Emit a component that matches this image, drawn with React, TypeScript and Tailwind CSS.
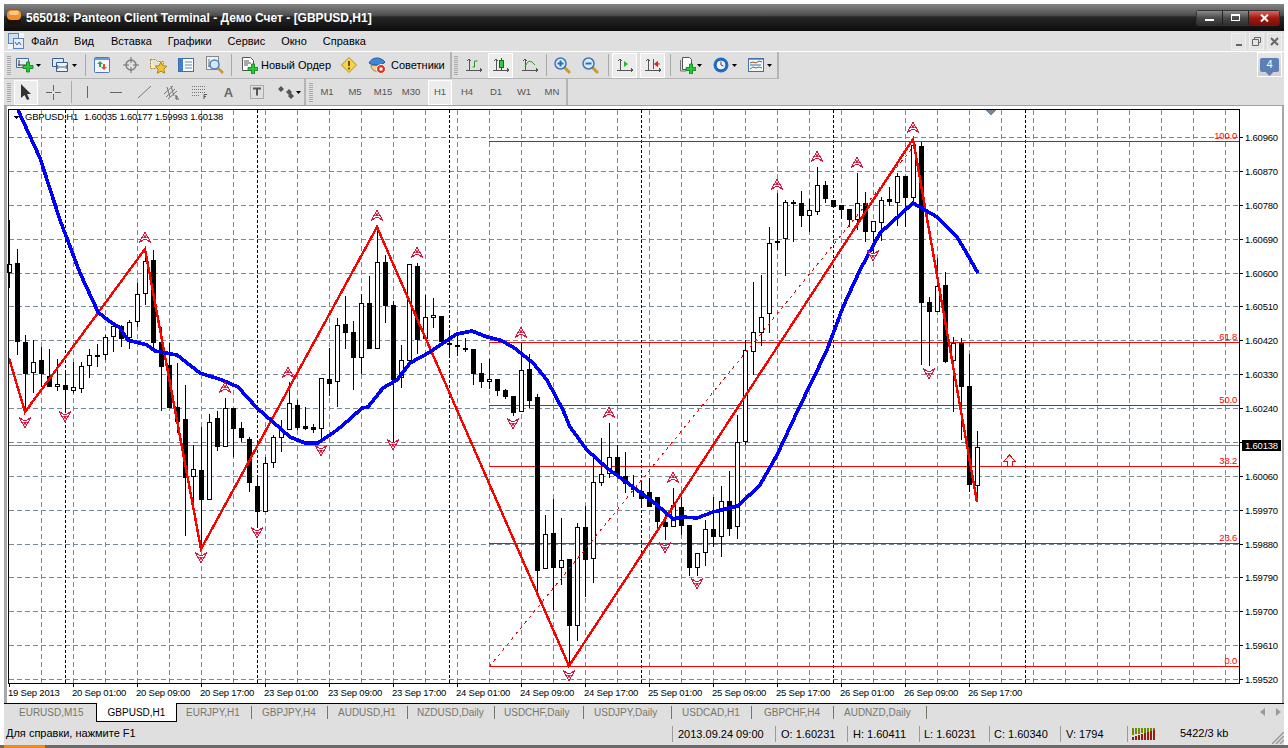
import React from 'react'

// [high, low, bodyTop, bodyBottom, black]; one candle every 8px from x=9
const candles: number[][] = [
  [220,288,264,273,0],[249,355,263,342,1],[335,413,342,374,1],[340,393,362,373,0],[347,387,360,374,1],
  [349,387,376,387,1],[359,391,384,387,0],[372,410,385,390,1],[362,393,387,391,0],[362,393,366,389,0],
  [349,378,355,366,0],[344,367,355,356,1],[335,360,337,355,0],[323,352,326,337,0],[325,347,326,339,1],
  [320,349,322,338,0],[283,327,294,322,0],[248,305,261,294,0],[250,350,260,343,1],[327,411,342,367,1],
  [343,408,365,408,1],[363,433,407,422,1],[385,536,419,478,1],[445,507,469,477,0],[427,548,470,500,1],
  [414,500,422,500,0],[411,451,418,447,1],[398,447,408,447,0],[408,457,408,429,1],[422,442,428,438,1],
  [437,492,439,483,1],[477,527,486,512,1],[457,512,463,512,0],[435,468,437,463,0],[420,452,430,438,0],
  [382,430,403,430,0],[400,430,405,428,1],[407,430,426,429,1],[424,433,427,430,1],[378,440,378,429,0],
  [348,396,379,384,1],[318,407,325,382,0],[296,349,324,333,1],[321,390,332,358,1],[294,374,303,358,0],
  [276,349,303,349,1],[227,349,262,349,0],[255,323,262,306,1],[301,450,305,380,1],[345,388,360,378,0],
  [264,361,264,361,0],[263,354,266,340,1],[295,339,317,339,0],[298,328,315,317,0],[316,342,316,342,1],
  [331,356,343,345,1],[334,356,345,347,1],[338,352,348,350,1],[349,385,349,374,1],[363,388,373,382,1],
  [359,389,379,381,0],[379,396,379,391,1],[389,399,390,397,1],[396,416,396,413,1],[343,412,370,412,0],
  [354,408,369,401,1],[394,592,397,571,1],[515,569,534,569,0],[499,610,533,568,1],[518,585,560,568,0],
  [559,667,559,626,1],[523,641,527,626,0],[506,597,527,560,1],[457,583,482,559,0],[438,486,474,483,0],
  [423,478,457,474,0],[445,477,457,475,1],[452,493,476,484,1],[475,497,487,490,1],[483,507,491,499,1],
  [478,507,492,507,1],[497,529,497,522,1],[512,540,522,527,1],[488,527,505,527,0],[497,535,507,526,1],
  [525,576,525,568,1],[553,576,553,568,0],[520,566,529,553,0],[497,547,529,537,1],[486,557,501,537,0],
  [471,536,501,529,1],[415,539,442,527,0],[340,445,350,442,0],[282,375,332,352,0],[275,346,317,333,0],
  [227,333,243,314,0],[193,250,241,242,1],[200,276,202,239,0],[200,242,202,204,1],[191,227,203,216,1],
  [199,232,210,216,0],[167,215,185,212,0],[181,203,185,199,1],[200,207,200,207,1],[205,219,205,210,1],
  [209,227,209,220,1],[173,230,203,220,0],[192,242,203,232,1],[221,257,221,232,0],[197,241,200,223,0],
  [187,206,199,202,1],[173,226,176,203,0],[176,227,176,198,1],[140,205,145,198,0],[142,365,146,303,1],
  [297,366,302,312,1],[258,312,286,312,0],[272,363,285,362,1],[337,412,343,361,0],[338,440,343,387,1],
  [354,492,386,485,1],[431,502,447,486,0],
]

const blue = '18,110 40,158 60,220 80,273 98,312 108,320 120,328 128,340 147,345 155,351 177,355 200,373 222,380 238,387 257,408 273,422 290,437 305,443 318,443 337,430 350,419 362,408 368,407 383,388 397,380 410,363 430,352 457,334 472,331 487,337 500,340 513,347 533,363 547,380 563,410 570,427 587,450 607,468 633,487 657,505 673,519 682,517 697,518 713,512 738,506 760,485 777,455 798,410 827,350 843,307 860,270 880,233 913,203 937,217 957,237 963,247 978,273'
const zigzag = '9,358 25,412 145,249 201,549 377,227 569,666 913,139 977,502'

const upMarks = [[145,238],[377,216],[417,253],[288,373],[225,388],[521,333],[609,413],[673,478],[777,185],[817,157],[857,163],[913,128]]
const downMarks = [[25,422],[65,416],[201,557],[257,532],[321,450],[393,444],[513,423],[569,675],[665,547],[697,583],[873,255],[929,373]]

const prices = ['1.60960','1.60870','1.60780','1.60690','1.60600','1.60510','1.60420','1.60330','1.60240','1.60150','1.60060','1.59970','1.59880','1.59790','1.59700','1.59610','1.59520']
const times = ['20 Sep 01:00','20 Sep 09:00','20 Sep 17:00','23 Sep 01:00','23 Sep 09:00','23 Sep 17:00','24 Sep 01:00','24 Sep 09:00','24 Sep 17:00','25 Sep 01:00','25 Sep 09:00','25 Sep 17:00','26 Sep 01:00','26 Sep 09:00','26 Sep 17:00']
const fibo = [[141,'100.0'],[342,'61.8'],[405,'50.0'],[466,'38.2'],[543,'23.6'],[666,'0.0']] as [number,string][]

const priceY = (i: number) => Math.round(137 + i * 33.875) + 0.5
const gridX = Array.from({ length: 38 }, (_, i) => 41 + 32 * i)
const periodX = [65, 257, 449, 641, 833, 1025]

function Chart() {
  return (
    <svg width={1275} height={597} viewBox="7 106 1275 597" className="block shrink-0">
      <rect x={7} y={106} width={1275} height={597} fill="#fff" />
      <g shapeRendering="crispEdges" fill="none" strokeWidth={1}>
        {prices.map((_, i) => <line key={i} x1={9} x2={1239} y1={priceY(i)} y2={priceY(i)} stroke="#778899" strokeDasharray="5 3" />)}
        {gridX.map(x => <line key={x} x1={x + 0.5} x2={x + 0.5} y1={110} y2={683} stroke="#778899" strokeDasharray="5 3" />)}
        {periodX.map(x => <line key={x} x1={x + 0.5} x2={x + 0.5} y1={110} y2={683} stroke="#000" strokeDasharray="3 2" />)}
        <line x1={9} x2={1239} y1={445.5} y2={445.5} stroke="#778899" />
        {fibo.map(([y]) => <line key={y} x1={489} x2={1239} y1={y + 0.5} y2={y + 0.5} stroke="#f00" />)}
        {candles.map(([h, l, t, b, k], i) => {
          const x = 9 + 8 * i
          return (
            <g key={i}>
              <rect x={x} y={h} width={1} height={l - h} fill="#000" />
              {k ? (
                <rect x={x - 2} y={t} width={5} height={Math.max(b - t, 2)} fill="#000" />
              ) : (
                <rect x={x - 1.5} y={t + 0.5} width={4} height={Math.max(b - t - 1, 2)} fill="#fff" stroke="#000" />
              )}
            </g>
          )
        })}
        <polyline points="489,667 918,141" stroke="#f00" strokeDasharray="3 4" />
        <polyline points={zigzag} stroke="#f00" strokeWidth={2.4} />
        <polyline points={blue} stroke="#00f" strokeWidth={3.6} />
        <path d="M1004 461h3v5h5v-5h3l-5.500-6z" stroke="#f00" fill="#fff" />
        <path d="M985 110h12l-6 5z" fill="#778899" stroke="none" />
        <path d="M13 116h6l-3 3z" fill="#000" stroke="none" />
      </g>
      {upMarks.map(([x, y]) => (
        <g key={`${x}u`} transform={`translate(${x} ${y})`}>
          <path d="M0-5.500L6 4.500 0 1-6 4.500z" fill="#fff" stroke="#dc143c" shapeRendering="crispEdges" />
          <path d="M0-3.500L2 0H-2z" fill="#dc143c" />
        </g>
      ))}
      {downMarks.map(([x, y]) => (
        <g key={`${x}d`} transform={`translate(${x} ${y})`}>
          <path d="M0 5.500L6-4.500 0-1-6-4.500z" fill="#fff" stroke="#dc143c" shapeRendering="crispEdges" />
          <path d="M0 3.500L2 0H-2z" fill="#dc143c" />
        </g>
      ))}
      <rect x={8.5} y={109.5} width={1231} height={574} fill="none" stroke="#000" shapeRendering="crispEdges" />
      <g className="text-[9.5px] tracking-[-0.2px]" fill="#000">
        <text x={25} y={120}>GBPUSD,H1</text>
        <text x={84} y={120}>1.60035 1.60177 1.59993 1.60138</text>
        {prices.map((p, i) => (
          <g key={p}>
            <rect x={1240} y={priceY(i) - 0.5} width={3} height={1} />
            <text x={1245} y={priceY(i) + 3.5}>{p}</text>
          </g>
        ))}
        <rect x={1242} y={440} width={39} height={11} />
        <text x={1245} y={449} fill="#fff">1.60138</text>
        <rect x={9} y={684} width={1} height={3} />
        <text x={8} y={696}>19 Sep 2013</text>
        {times.map((t, i) => (
          <g key={t}>
            <rect x={73 + 64 * i} y={684} width={1} height={3} />
            <text x={72 + 64 * i} y={696}>{t}</text>
          </g>
        ))}
      </g>
      <g className="text-[9.5px] tracking-[-0.2px]" fill="#f00">
        {fibo.map(([y, label]) => <text key={label} x={1237} y={y - 2} textAnchor="end">{label}</text>)}
      </g>
    </svg>
  )
}

const Caret = ({ className = '' }: { className?: string }) => <svg width={5} height={3} viewBox="0 0 5 3" className={`shrink-0 ${className}`}><path d="M0 0h5L2.500 3z" fill="#000" /></svg>
const Grip = ({ className = '' }: { className?: string }) => <div className={`w-[4px] h-[20px] shrink-0 bg-[repeating-linear-gradient(0deg,#a8a8a8_0_1px,transparent_1px_2px)] ${className}`} />
const Sep = ({ className = '' }: { className?: string }) => <div className={`w-px h-[22px] shrink-0 bg-[#a9a9a9] ${className}`} />
const Pressed = ({ className = '', children }: { className?: string; children: React.ReactNode }) => (
  <div className={`h-[25px] flex items-center justify-center shrink-0 bg-[#ececec] border border-white ${className}`}>{children}</div>
)

// all toolbar icons share the same kind of small svg
const Ico = ({ w = 16, h = 16, className = '', children }: { w?: number; h?: number; className?: string; children: React.ReactNode }) => (
  <svg width={w} height={h} viewBox={`0 0 ${w} ${h}`} className={`shrink-0 ${className}`}>{children}</svg>
)
const Plus = ({ x, y }: { x: number; y: number }) => (
  <path transform={`translate(${x} ${y})`} d="M3.500 0h3v3.500H10v3H6.500V10h-3V6.500H0v-3h3.500z" fill="#22cc33" stroke="#0c7a1a" strokeWidth={0.8} />
)
const Axes = () => <path d="M3 1v12M0 12h16M3 1 1.500 3M3 1l1.500 2M16 12l-2-1.500M16 12l-2 1.500" fill="none" stroke="#555" strokeWidth={1} shapeRendering="crispEdges" />
const Glass = ({ plus }: { plus?: boolean }) => (
  <Ico w={17} h={17}>
    <path d="M10 10l5 5" stroke="#c79a2a" strokeWidth={3} strokeLinecap="round" />
    <circle cx={6.500} cy={6.500} r={5.500} fill="#dbeaf7" stroke="#3a78b8" strokeWidth={1.500} />
    <path d={plus ? 'M3.500 6.500h6M6.500 3.500v6' : 'M3.500 6.500h6'} stroke="#2e6fb0" strokeWidth={2} />
  </Ico>
)

function Toolbars() {
  return (
    <div className="h-[55px] bg-[#dfdfdf] border-t border-white shrink-0">
      <div className="h-[27px] flex">
        <div className="w-[448px] flex items-center border-r-2 border-b border-[#b4b4b4]">
          <Grip className="ml-[3px]" />
          <Ico w={18} h={16} className="ml-[5px]">
            <path d="M.5 1.500h12v9H.5z" fill="#e8eef6" stroke="#4a6a9a" />
            <path d="M3 3v6M2 8h8" stroke="#333" />
            <Plus x={7} y={5} />
          </Ico>
          <Caret className="ml-[2px]" />
          <Ico w={18} h={16} className="ml-[10px]">
            <path d="M1.500 1.500h11v8h-11z" fill="#dfe9f5" stroke="#3c5c8e" />
            <path d="M5.500 5.500h11v9h-11z" fill="#eef3fa" stroke="#3c5c8e" />
            <path d="M7 10h8M7 8l-1 2 1 2M15 8l1 2-1 2" stroke="#3c5c8e" fill="none" />
          </Ico>
          <Caret className="ml-[3px]" />
          <Sep className="ml-[8px]" />
          <Ico className="ml-[8px]">
            <rect x={0.500} y={0.500} width={15} height={15} rx={1} fill="#f3f7fc" stroke="#4b79b5" />
            <rect x={1} y={1} width={14} height={2} fill="#6d9ad0" />
            <path d="M6 4l3 3H7v3H5V7H3z" fill="#2aa844" />
            <path d="M10 13l-3-3h2V7h2v3h2z" fill="#e0502a" />
          </Ico>
          <Ico className="ml-[13px]">
            <circle cx={8} cy={8} r={5} fill="none" stroke="#808080" strokeWidth={1.500} />
            <path d="M8 0v6M8 10v6M0 8h6M10 8h6" stroke="#707070" />
          </Ico>
          <Ico w={18} h={18} className="ml-[10px]">
            <path d="M1.500 3.500h5l2 2h6v3M1.500 3.500v9h5" fill="#fbeeb0" stroke="#9a8a4a" strokeDasharray="2 1" />
            <path d="M12 6l1.800 3.700 4 .6-2.900 2.800.7 4-3.600-1.900-3.600 1.900.7-4-2.900-2.800 4-.6z" fill="#f2c530" stroke="#a8841c" />
          </Ico>
          <Ico className="ml-[11px]">
            <rect x={0.500} y={1.500} width={15} height={13} fill="#fff" stroke="#3f6fae" />
            <rect x={1} y={2} width={4} height={12} fill="#3f7fd0" />
            <path d="M7 5h7M7 8h7M7 11h7" stroke="#5a86bb" />
          </Ico>
          <Ico w={18} h={18} className="ml-[12px]">
            <rect x={0.500} y={0.500} width={12} height={13} fill="#eef2f6" stroke="#888" />
            <path d="M3 3v8M2 10h8" stroke="#777" />
            <path d="M12 12l5 5" stroke="#c49a2c" strokeWidth={2.500} />
            <circle cx={8.500} cy={8.500} r={4.500} fill="#d5e6f5" stroke="#4c84bd" strokeWidth={1.500} />
          </Ico>
          <Sep className="ml-[7px]" />
          <Ico w={17} h={18} className="ml-[9px]">
            <path d="M1.500 1.500h8l3 3v10h-11z" fill="#fff" stroke="#555" />
            <path d="M3 5h5M3 7h7M3 9h4" stroke="#555" />
            <Plus x={7} y={8} />
          </Ico>
          <span className="ml-[3px] w-[70px] shrink-0 text-[11px] whitespace-nowrap">Новый Ордер</span>
          <Ico className="ml-[10px]">
            <path d="M8 .5L15.500 8 8 15.500.5 8z" fill="#f6d445" stroke="#a8912a" />
            <path d="M8 4v5M8 10.500v2" stroke="#7a4a10" strokeWidth={2} />
          </Ico>
          <Ico w={18} h={18} className="ml-[11px]">
            <path d="M3 9c0 4 3 7 7 6l2-5z" fill="#f4d28a" stroke="#a97d2e" />
            <path d="M1 7c3-6 11-7 16-1-1 3-13 4-16 1z" fill="#3f86d8" stroke="#1e5ca8" />
            <circle cx={13} cy={13} r={4.500} fill="#e03020" stroke="#fff" />
            <rect x={11.500} y={11.500} width={3} height={3} fill="#fff" />
          </Ico>
          <span className="ml-[5px] w-[56px] shrink-0 text-[11px] whitespace-nowrap">Советники</span>
        </div>
        <div className="w-[327px] flex items-center border-r-2 border-b border-[#b4b4b4]">
          <Grip className="ml-[2px]" />
          <Ico w={16} h={14} className="ml-[8px]"><Axes /><path d="M8.500 9V3h3M8.500 9h-2" fill="none" stroke="#1d9a1d" /></Ico>
          <Pressed className="ml-[6px] w-[25px]"><Ico w={16} h={14}><Axes /><rect x={6.500} y={2.500} width={4} height={7} fill="#2ecc40" stroke="#0c6f16" /><path d="M8.500 0v3M8.500 9v3" stroke="#0c6f16" /></Ico></Pressed>
          <Ico w={16} h={14} className="ml-[9px]"><Axes /><path d="M3 9c2-5 4-7 7-5l3 3" fill="none" stroke="#2a9a2a" /></Ico>
          <Sep className="ml-[8px]" />
          <span className="ml-[7px] flex"><Glass plus /></span>
          <span className="ml-[11px] flex"><Glass /></span>
          <Sep className="ml-[9px]" />
          <Pressed className="ml-[3px] w-[25px]"><Ico w={16} h={14}><Axes /><path d="M7 3l4 3-4 3z" fill="#25b82a" /></Ico></Pressed>
          <Pressed className="ml-[3px] w-[25px]"><Ico w={16} h={14}><Axes /><path d="M8.500 1v10" stroke="#2a5bd0" /><path d="M15 6h-3M9.500 6l3-2.500v5z" stroke="#d0281e" fill="#d0281e" /></Ico></Pressed>
          <Sep className="ml-[5px]" />
          <Ico w={17} h={18} className="ml-[8px]">
            <path d="M3.500 1.500h7l2 2v10h-9z" fill="#fff" stroke="#555" />
            <path d="M1.500 4v11h6" fill="none" stroke="#777" />
            <Plus x={7} y={8} />
          </Ico>
          <Caret className="ml-px" />
          <Ico className="ml-[11px]">
            <circle cx={8} cy={8} r={7.500} fill="#1f6fd0" />
            <circle cx={8} cy={8} r={5} fill="#eef3f8" stroke="#0f4a98" />
            <path d="M8 4.500V8l2.500 1" fill="none" stroke="#445" />
          </Ico>
          <Caret className="ml-[3px]" />
          <Ico className="ml-[11px]">
            <rect x={0.500} y={1.500} width={15} height={13} fill="#f4f7fb" stroke="#3f6fae" />
            <rect x={1} y={2} width={14} height={1} fill="#7aa2d2" />
            <path d="M2 8h11" stroke="#3f6fae" />
            <path d="M2 6l3-1 3 1 3-2 3 1" fill="none" stroke="#a04a20" />
            <path d="M2 12l3-2 3 1 3-1 3 1" fill="none" stroke="#2a9a2a" />
          </Ico>
          <Caret className="ml-[3px]" />
        </div>
        <div className="ml-auto mr-[2px] w-[25px] h-[25px] flex items-center justify-center bg-[linear-gradient(to_bottom,#e8e8e8,#cfcfcf)] border border-white">
          <div className="relative w-[19px] h-[14px] bg-[#5e7fb5] rounded-[2px] flex items-center justify-center text-white text-[11px] leading-none">
            4
            <div className="absolute left-[7px] -bottom-[3px] w-[5px] h-[5px] bg-[#5e7fb5] rotate-45" />
          </div>
        </div>
      </div>
      <div className="h-[27px] flex border-b border-[#a0a0a0]">
        <div className="w-[302px] flex items-center border-r-2 border-[#b4b4b4]">
          <Grip className="ml-[3px]" />
          <Pressed className="ml-[3px] w-[24px]">
            <Ico w={12} h={16}><path d="M1 0v14l3.500-3 2.500 5 2.500-1-2.500-5H11z" fill="#333" /></Ico>
          </Pressed>
          <Ico w={17} h={17} className="ml-[7px]"><path d="M8.500 1v6M8.500 10v6M1 8.500h6M10 8.500h6" stroke="#666" shapeRendering="crispEdges" /></Ico>
          <Sep className="ml-[9px]" />
          <Ico w={14} h={14} className="ml-[8px]"><path d="M7.500 1v12" stroke="#666" shapeRendering="crispEdges" /></Ico>
          <Ico w={12} h={14} className="ml-[16px]"><path d="M0 7.500h12" stroke="#666" shapeRendering="crispEdges" /></Ico>
          <Ico w={13} h={14} className="ml-[16px]"><path d="M0 13L13 1" stroke="#777" /></Ico>
          <Ico w={18} h={16} className="ml-[12px]"><path d="M1 10l9-8M3 13l9-8M5 15l9-8M4 3l3 10M8 2l3 10" stroke="#777" fill="none" /><path d="M13 11v4h3M13 13h2" stroke="#555" fill="none" /></Ico>
          <Ico w={17} h={16} className="ml-[11px]"><path d="M0 2.500h13M0 5.500h13M0 8.500h13M0 11.500h8" stroke="#777" strokeDasharray="1 1" /><path d="M12 10.500v4.500M12 10.500h3M12 12.500h2" stroke="#555" fill="none" /></Ico>
          <span className="ml-[14px] w-[11px] shrink-0 text-[13px] font-bold text-[#666] leading-none text-center">A</span>
          <Ico w={14} h={14} className="ml-[16px]"><rect x={0.500} y={0.500} width={13} height={13} fill="none" stroke="#777" strokeDasharray="1 1" /><path d="M3 3.500h8M7 3.500v7" stroke="#555" strokeWidth={2} /></Ico>
          <Ico w={16} h={14} className="ml-[14px]"><path d="M3 3.500h2M11 10.500h2" stroke="#777" /><path d="M3 1l3 3-3 3-3-3zM11 4l3 3-3 3-3-3zM13 8l3 3-3 3-3-3z" fill="#555" /></Ico>
          <Caret className="ml-[2px]" />
        </div>
        <div className="w-[262px] flex items-center border-r-2 border-[#b4b4b4] text-[#555] text-[9.5px]">
          <Grip className="ml-[3px]" />
          <span className="w-[28px] text-center shrink-0">M1</span>
          <span className="w-[28px] text-center shrink-0">M5</span>
          <span className="w-[28px] text-center shrink-0">M15</span>
          <span className="w-[28px] text-center shrink-0">M30</span>
          <Pressed className="ml-[3px] w-[24px]">H1</Pressed>
          <span className="ml-px w-[28px] text-center shrink-0">H4</span>
          <span className="ml-px w-[28px] text-center shrink-0">D1</span>
          <span className="w-[28px] text-center shrink-0">W1</span>
          <span className="w-[28px] text-center shrink-0">MN</span>
        </div>
      </div>
    </div>
  )
}

const tabs = [
  ['EURJPY,H1', 'w-[75px] pl-[9px]'],
  ['GBPJPY,H4', 'w-[76px] pl-[10px]'],
  ['AUDUSD,H1', 'w-[80px] pl-[10px]'],
  ['NZDUSD,Daily', 'w-[87px] pl-[9px]'],
  ['USDCHF,Daily', 'w-[89px] pl-[9px]'],
  ['USDJPY,Daily', 'w-[88px] pl-[10px]'],
  ['USDCAD,H1', 'w-[80px] pl-[10px]'],
  ['GBPCHF,H4', 'w-[82px] pl-[12px]'],
  ['AUDNZD,Daily', 'w-[93px] pl-[10px]'],
]

function Tabs() {
  return (
    <div className="h-[19px] shrink-0 bg-[#dfdfdf] border-t border-black flex text-[10px] text-[#77776c] relative">
      <div className="w-[92px] pl-[15px] leading-[17px]">EURUSD,M15</div>
      <div className="w-[81px] h-[19px] bg-white border-x border-b border-black text-black text-center leading-[17px] -mt-px pt-px">GBPUSD,H1</div>
      {tabs.map(([name, cls]) => (
        <div key={name} className={`${cls} h-[13px] mt-[2px] border-r border-[#77776c] leading-[14px] whitespace-nowrap shrink-0`}>{name}</div>
      ))}
      <div className="ml-auto mr-[3px] flex items-center gap-[11px] pb-[2px]">
        <svg width={5} height={8}><path d="M5 0v8L0 4z" fill="#9a9a9a" /></svg>
        <svg width={5} height={8}><path d="M0 0v8l5-4z" fill="#9a9a9a" /></svg>
      </div>
    </div>
  )
}

function StatusBar() {
  return (
    <div className="h-[23px] shrink-0 bg-[#dfdfdf] flex items-center text-[11px] text-black relative">
      <div className="w-[668px] pl-[2px]">Для справки, нажмите F1</div>
      <div className="w-[103px] h-[16px] border-l border-[#9a9a9a] pl-[5px] leading-[16px]">2013.09.24 09:00</div>
      <div className="w-[72px] h-[16px] border-l border-[#9a9a9a] pl-[5px] leading-[16px]">O: 1.60231</div>
      <div className="w-[72px] h-[16px] border-l border-[#9a9a9a] pl-[5px] leading-[16px]">H: 1.60411</div>
      <div className="w-[70px] h-[16px] border-l border-[#9a9a9a] pl-[4px] leading-[16px]">L: 1.60231</div>
      <div className="w-[71px] h-[16px] border-l border-[#9a9a9a] pl-[4px] leading-[16px]">C: 1.60340</div>
      <div className="w-[67px] h-[16px] border-l border-[#9a9a9a] pl-[5px] leading-[16px]">V: 1794</div>
      <div className="h-[16px] border-l border-[#9a9a9a] pl-[4px] flex items-center">
        <svg width={24} height={12} viewBox="0 0 24 12" shapeRendering="crispEdges">
          {[0, 3, 6, 9, 12, 15, 18, 21].map((x, i) => (
            <g key={x}>
              <rect x={x} y={0} width={2} height={7 - i * 0.6} fill="#6b8e00" />
              <rect x={x} y={9 - i} width={2} height={3 + i} fill="#9b1c0c" />
            </g>
          ))}
        </svg>
        <span className="ml-[24px] whitespace-nowrap">5422/3 kb</span>
      </div>
      <svg width={12} height={12} className="absolute right-0 bottom-px" viewBox="0 0 12 12">
        <path d="M0 12L12 0M4 12l8-8M8 12l4-4" stroke="#9a9a9a" strokeWidth={1.500} />
      </svg>
    </div>
  )
}

export default function App() {
  return (
    <div className="w-[1288px] h-[748px] bg-white overflow-hidden font-['Liberation_Sans',Arial,sans-serif] relative">
      <div className="pt-[4px] pl-[4px]">
        <div className="w-[1280px] flex flex-col">
          <div className="h-[27px] shrink-0 flex items-center bg-[linear-gradient(to_bottom,#858585_0%,#4e4e4e_42%,#262626_48%,#0c0c0c_100%)]">
            <svg width={14} height={15} viewBox="0 0 14 15" className="ml-[3px] shrink-0">
              <rect width={14} height={15} rx={4} fill="#1c120a" />
              <rect width={14} height={10} rx={4} fill="#f0902c" />
              <rect x={2} y={1} width={10} height={4} rx={2} fill="#ffc98a" />
            </svg>
            <span className="ml-[5px] text-white font-bold text-[12px] whitespace-nowrap">565018: Panteon Client Terminal - Демо Счет - [GBPUSD,H1]</span>
            <div className="ml-auto mr-[5px] flex h-[14px] rounded-[2px] shadow-[0_0_0_1px_#333]">
              <div className="w-[26px] flex items-center justify-center bg-[linear-gradient(to_bottom,#8a8a8a,#4a4a4a_50%,#2e2e2e)] border-r border-[#222]"><div className="w-[9px] h-[2px] mt-[5px] bg-white" /></div>
              <div className="w-[26px] flex items-center justify-center bg-[linear-gradient(to_bottom,#8a8a8a,#4a4a4a_50%,#2e2e2e)] border-r border-[#222]"><div className="w-[9px] h-[7px] border border-t-2 border-white" /></div>
              <div className="w-[30px] flex items-center justify-center bg-[linear-gradient(to_bottom,#d56a60,#a31810_50%,#7e0e08)]">
                <svg width={9} height={8} viewBox="0 0 9 8"><path d="M1 .5l7 7M8 .5l-7 7" stroke="#fff" strokeWidth={2} /></svg>
              </div>
            </div>
          </div>
          <div className="h-[20px] shrink-0 bg-[#dfdfdf] flex items-center text-[11px] text-black">
            <svg width={16} height={16} viewBox="0 0 16 16" className="ml-[4px] shrink-0">
              <rect width={16} height={16} fill="#f5f8fc" />
              <rect x={0.500} y={0.500} width={10} height={10} fill="#cfe0f2" stroke="#5a84ba" />
              <rect x={5.500} y={5.500} width={10} height={10} fill="#e6eff9" stroke="#5a84ba" />
              <path d="M7 9l2 3 2-3 2 3" fill="none" stroke="#3a64a0" />
            </svg>
            <span className="ml-[7px]">Файл</span>
            <span className="ml-[16px]">Вид</span>
            <span className="ml-[17px]">Вставка</span>
            <span className="ml-[16px]">Графики</span>
            <span className="ml-[16px]">Сервис</span>
            <span className="ml-[16px]">Окно</span>
            <span className="ml-[16px]">Справка</span>
            <div className="ml-auto mr-[2px] flex gap-[3px]">
              <div className="w-[15px] h-[17px] border border-[#efefef] bg-[#e4e4e4] flex items-end justify-center pb-[3px]"><div className="w-[6px] h-[2px] bg-[#666]" /></div>
              <div className="w-[15px] h-[17px] border border-[#efefef] bg-[#e4e4e4] flex items-center justify-center">
                <svg width={9} height={9}><path d="M2.500 2.500V.5h6v5H7M.5 2.500h6v6h-6z" fill="none" stroke="#666" /></svg>
              </div>
              <div className="w-[15px] h-[17px] border border-[#efefef] bg-[#e4e4e4] flex items-center justify-center">
                <svg width={9} height={9}><path d="M1 1l7 7M8 1l-7 7" stroke="#666" strokeWidth={2} /></svg>
              </div>
            </div>
          </div>
          <Toolbars />
          <div className="h-[597px] shrink-0 flex bg-[#a8a8a8]">
            <div className="w-[3px] shrink-0" />
            <Chart />
            <div className="w-[2px] shrink-0" />
          </div>
          <Tabs />
          <StatusBar />
        </div>
      </div>
      <div className="h-[3px] w-full bg-[#6a6a6a] flex">
        <div className="ml-[4px] w-[41px] h-[3px] bg-[#f08a20]" />
      </div>
    </div>
  )
}
